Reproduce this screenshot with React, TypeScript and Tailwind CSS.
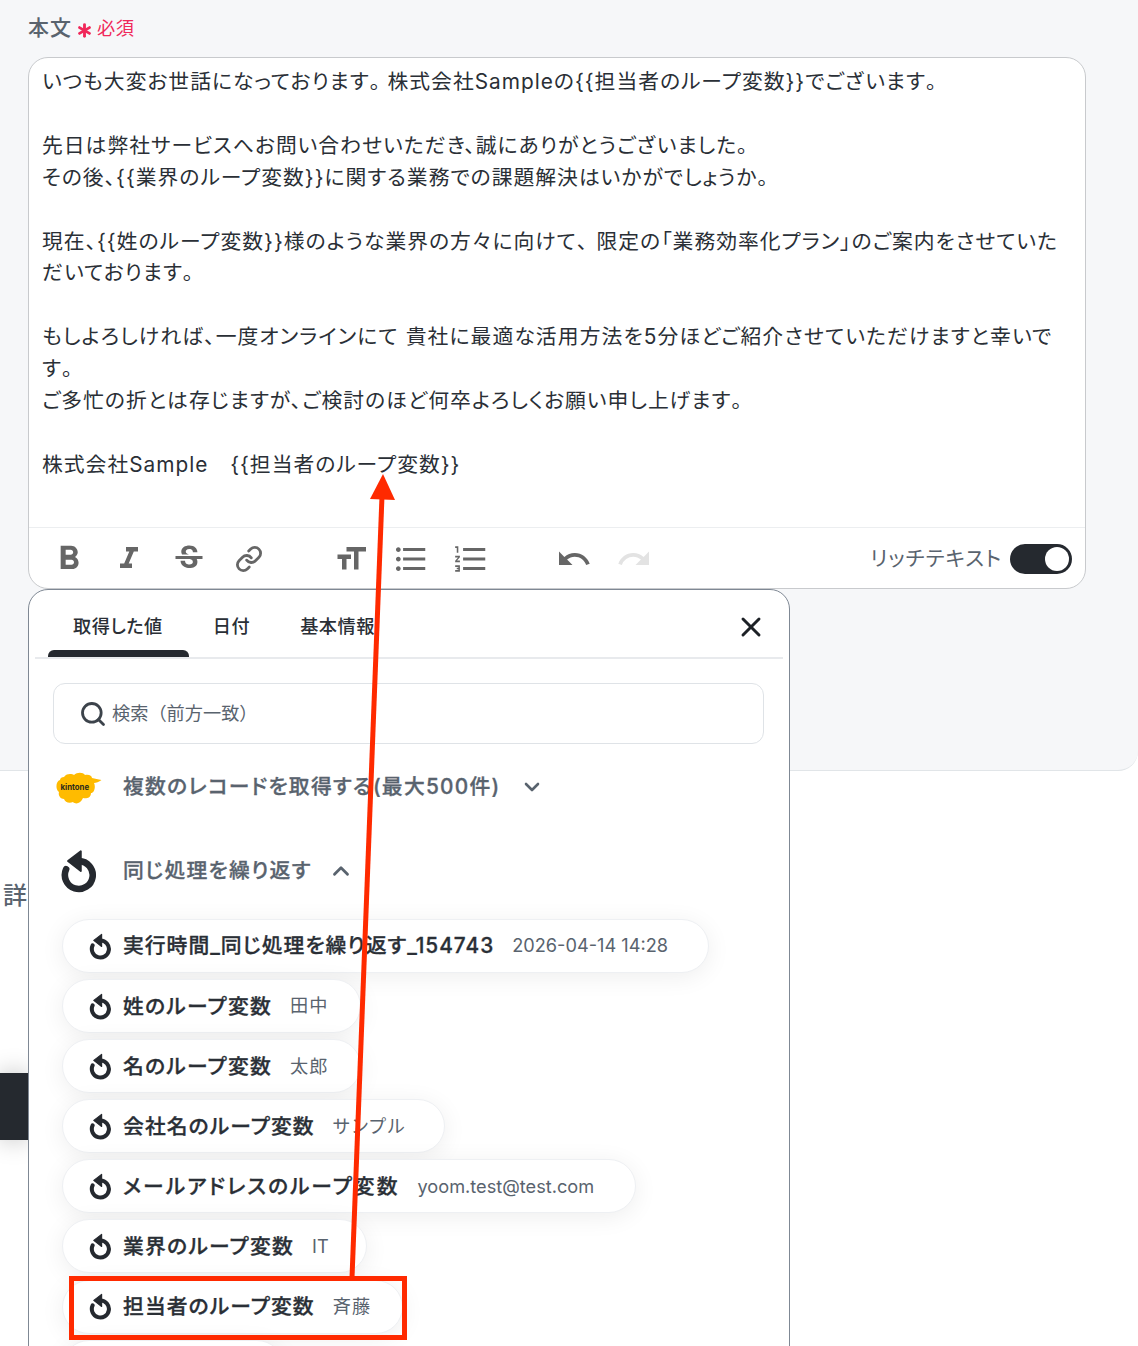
import React from 'react';
import { X, Search, ChevronDown, ChevronUp, Link, Asterisk } from 'lucide-react';
import {
  MdFormatBold,
  MdFormatItalic,
  MdStrikethroughS,
  MdFormatSize,
  MdFormatListBulleted,
  MdFormatListNumbered,
  MdUndo,
  MdRedo,
} from 'react-icons/md';

const rows = [
  { name: '実行時間_同じ処理を繰り返す_154743', value: '2026-04-14 14:28', width: 'w-[647px]', nameClass: 'tracking-[1px]', valueClass: 'tracking-normal' },
  { name: '姓のループ変数', value: '田中', width: 'w-[299px]', nameClass: 'tracking-[1.250px]', valueClass: 'tracking-[1px]' },
  { name: '名のループ変数', value: '太郎', width: 'w-[299px]', nameClass: 'tracking-[1.250px]', valueClass: 'tracking-[1px]' },
  { name: '会社名のループ変数', value: 'サンプル', width: 'w-[383px]', nameClass: 'tracking-[1.100px]', valueClass: 'tracking-[1.750px]' },
  { name: 'メールアドレスのループ変数', value: 'yoom.test@test.com', width: 'w-[574px]', nameClass: 'tracking-[2px]', valueClass: 'tracking-normal' },
  { name: '業界のループ変数', value: 'IT', width: 'w-[305px]', nameClass: 'tracking-[1.250px]', valueClass: 'tracking-normal' },
  { name: '担当者のループ変数', value: '斉藤', width: 'w-[341px]', nameClass: 'tracking-[1.100px]', valueClass: 'tracking-[1px]' },
  { name: '', value: '', width: 'w-[222px]', nameClass: '', valueClass: '' },
];

function LoopIcon({ className }: { className: string }) {
  return (
    <svg viewBox="0 0 24 24" className={className} fill="none">
      <path
        d="M12 6.600 A7.600 7.600 0 1 1 5 11"
        stroke="currentColor"
        strokeWidth="3.600"
        strokeLinecap="round"
      />
      <path d="M6 6.600 L13 1.200 L13 12 Z" fill="currentColor" stroke="currentColor" strokeLinejoin="round" />
    </svg>
  );
}

function KintoneLogo() {
  return (
    <svg viewBox="0 0 46 34" className="w-[46px] h-[34px] mt-[4px] ml-[1px]">
      <path
        d="M8 5 C11 1 16 2 18 3 C21 0 27 0 29 3 C33 2 36 4 36 6 C39 7 42 7 45.500 8 C43 10 40 11 38 11 C40 15 38 21 35 21 C35 26 30 27 27 26 C25 31 20 33 17 30 C13 32 9 30 8 27 C4 27 2 23 3 20 C-1 17 0 9 4 8 C4 6 6 5 8 5 Z"
        fill="#ffbb00"
      />
      <text x="4.500" y="18" fontSize="7.800" fontWeight="700" letterSpacing="0" fill="#2b2a1c" fontFamily="Inter">
        kintone
      </text>
    </svg>
  );
}

function ToolButton({ children, className = '' }: { children: React.ReactNode; className?: string }) {
  return <div className={`w-[60px] flex justify-center shrink-0 ${className}`}>{children}</div>;
}

// full width punctuation, the rest of the text is set proportional
function Maru() {
  return <span className="[font-feature-settings:normal] tracking-[-3px]">。</span>;
}

function App() {
  return (
    <div
      className="relative w-[1138px] h-[1346px] overflow-hidden bg-white text-[#2a2f36] tracking-[1px] [font-feature-settings:'palt']"
      style={{ fontFamily: 'Inter, "Noto Sans CJK JP", sans-serif' }}
    >
      {/* Form section */}
      <div className="h-[771px] bg-[#f6f7f9] border-b border-[#e1e5e8] rounded-br-[20px] pl-[28px] pr-[52px] pt-[14px]">
        <div className="flex items-center h-[28px] mb-[15px]">
          <span className="text-[21px] font-medium text-[#59636e]">本文</span>
          <Asterisk className="ml-[1px] mt-[4px] w-[23px] h-[23px] text-[#f0285a]" strokeWidth={3} />
          <span className="ml-[1px] mt-[1px] text-[18.200px] tracking-[0.5px] text-[#f0285a]">必須</span>
        </div>
        <div className="h-[532px] bg-white border border-[#c8cacd] rounded-[20px] flex flex-col">
          <div className="flex-1 pl-[13px] pr-[24px] pt-[8px] text-[20.800px] leading-[31.900px] text-[#2a2f36]">
            <p>いつも大変お世話になっております<Maru />株式会社Sampleの{'{{'}担当者のループ変数{'}}'}でございます<Maru /></p>
            <p>&nbsp;</p>
            <p>先日は弊社サービスへお問い合わせいただき、誠にありがとうございました<Maru /></p>
            <p>その後、{'{{'}業界のループ変数{'}}'}に関する業務での課題解決はいかがでしょうか<Maru /></p>
            <p>&nbsp;</p>
            <p>現在、{'{{'}姓のループ変数{'}}'}様のような業界の方々に向けて<span className="[font-feature-settings:normal] tracking-[-1px]">、</span>限定の「業務効率化プラン」のご案内をさせていただいております<Maru /></p>
            <p>&nbsp;</p>
            <p className="tracking-[1.100px]">もしよろしければ、一度オンラインにて 貴社に最適な活用方法を5分ほどご紹介させていただけますと幸いです<Maru /></p>
            <p>ご多忙の折とは存じますが、ご検討のほど何卒よろしくお願い申し上げます<Maru /></p>
            <p>&nbsp;</p>
            <p>株式会社Sample　{'{{'}担当者のループ変数{'}}'}</p>
          </div>
          <div className="h-[61px] pt-[1px] border-t border-[#eceef0] flex items-center pl-[10px] pr-[13px] text-[#666]">
            <ToolButton><MdFormatBold className="w-[40px] h-[40px]" /></ToolButton>
            <ToolButton><MdFormatItalic className="w-[36px] h-[36px]" /></ToolButton>
            <ToolButton><MdStrikethroughS className="w-[36px] h-[36px]" /></ToolButton>
            <ToolButton><Link className="w-[28px] h-[28px]" strokeWidth={2.4} /></ToolButton>
            <ToolButton className="ml-[42px]"><MdFormatSize className="w-[36px] h-[36px]" /></ToolButton>
            <ToolButton><MdFormatListBulleted className="w-[38px] h-[38px]" /></ToolButton>
            <ToolButton><MdFormatListNumbered className="w-[38px] h-[38px]" /></ToolButton>
            <ToolButton className="ml-[43px]"><MdUndo className="w-[36px] h-[36px]" /></ToolButton>
            <ToolButton><MdRedo className="w-[36px] h-[36px] text-[#e3e3e3]" /></ToolButton>
            <span className="ml-auto text-[20.800px] text-[#59636e]">リッチテキスト</span>
            <div className="ml-[8px] w-[62px] h-[30px] rounded-full bg-[#25292f] flex items-center justify-end pr-[3px]">
              <div className="w-[24px] h-[24px] rounded-full bg-white" />
            </div>
          </div>
        </div>
      </div>

      {/* Page behind the popover */}
      <div className="absolute left-[3px] top-[880px] text-[24px] font-medium leading-[32px] text-[#59636e]">詳</div>
      <div className="absolute left-0 top-[1073px] w-[28px] h-[67px] bg-[#25292f] shadow-[0_0_24px_rgba(0,0,0,0.25)]" />

      {/* Variable popover */}
      <div className="absolute left-[28px] top-[589px] w-[762px] h-[800px] bg-white border border-[#7f8894] rounded-[20px]">
        <div className="relative h-[69px] mx-[6px] border-b-2 border-[#e8eaed] flex items-start pt-[20px] text-[18.200px] font-medium tracking-[0.5px] leading-[32px]">
          <span className="ml-[38px]">取得した値</span>
          <span className="ml-[50px]">日付</span>
          <span className="ml-[50px]">基本情報</span>
          <div className="absolute left-[13px] bottom-0 w-[141px] h-[7px] bg-[#25292f] rounded-t-[6px]" />
          <X className="absolute right-[16px] top-[21px] w-[32px] h-[32px] text-[#1d2126]" strokeWidth={2.2} />
        </div>
        <div className="ml-[24px] mr-[25px] mt-[24px] h-[61px] border border-[#dfe3e7] rounded-[12px] flex items-center pl-[25px] text-[18.200px] tracking-normal text-[#59636e]">
          <Search className="w-[28px] h-[28px] text-[#3c434b]" strokeWidth={2.4} />
          <span className="ml-[5px] [font-feature-settings:normal]">検索（前方一致）</span>
        </div>
        <div className="flex items-center h-[32px] mt-[27px] ml-[26px] text-[20.800px] font-medium tracking-[1.250px] [-webkit-text-stroke:0.3px] text-[#59636e]">
          <KintoneLogo />
          <span className="ml-[21px]">複数のレコードを取得する(最大500件)</span>
          <ChevronDown className="ml-[20px] w-[24px] h-[24px]" strokeWidth={2.6} />
        </div>
        <div className="flex items-center h-[48px] mt-[44px] ml-[28px] text-[20.800px] font-medium tracking-[1.250px] [-webkit-text-stroke:0.3px] text-[#59636e]">
          <LoopIcon className="w-[44px] h-[44px] text-[#25292f]" />
          <span className="ml-[22px]">同じ処理を繰り返す</span>
          <ChevronUp className="ml-[16px] w-[26px] h-[26px]" strokeWidth={2.6} />
        </div>
        <div className="mt-[24px] ml-[33px] flex flex-col gap-[6.100px]">
          {rows.map((row, i) => (
            <div
              key={i}
              className={`${row.width} h-[54px] shrink-0 rounded-full bg-white border border-[#eef0f3] shadow-[0_4px_24px_rgba(0,0,0,0.07)] flex items-center pl-[24px]`}
            >
              {row.name && <LoopIcon className="w-[27px] h-[27px] text-[#25292f] shrink-0" />}
              <span className={`ml-[9px] text-[20.800px] font-medium [-webkit-text-stroke:0.3px] whitespace-nowrap ${row.nameClass}`}>{row.name}</span>
              <span className={`ml-[18px] text-[18.200px] text-[#59636e] whitespace-nowrap ${row.valueClass}`}>{row.value}</span>
            </div>
          ))}
        </div>
      </div>

      {/* Annotation */}
      <svg className="absolute left-0 top-0 w-[1138px] h-[1346px] pointer-events-none" viewBox="0 0 1138 1346">
        <line x1="352" y1="1278" x2="382" y2="496" stroke="#ff2a00" strokeWidth="5" />
        <path d="M383 474 L395 500 L370 499 Z" fill="#ff2a00" />
        <rect x="71.500" y="1278.500" width="333" height="59" fill="none" stroke="#ff2a00" strokeWidth="5" />
      </svg>
    </div>
  );
}

export default App;
